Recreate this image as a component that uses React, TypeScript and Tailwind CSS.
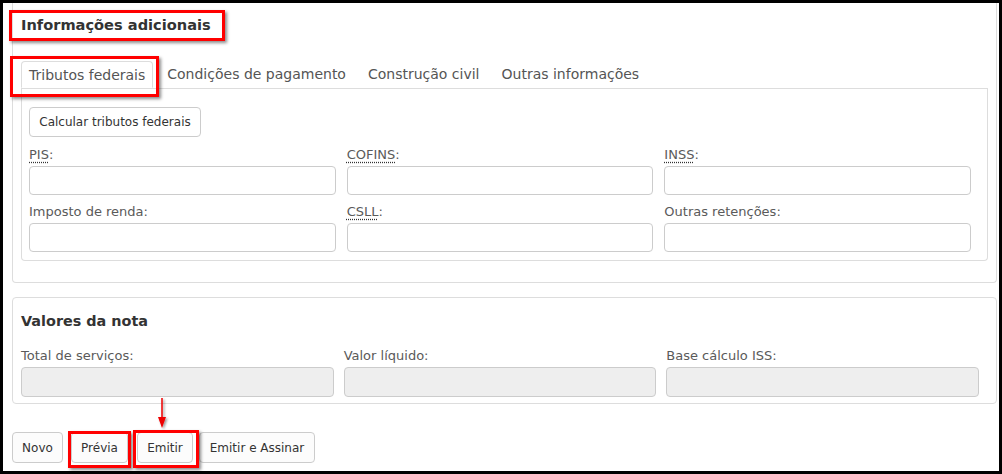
import React from 'react';

const Abbr: React.FC<{ text: string }> = ({ text }) => (
  <span>
    <span className="underline decoration-dotted decoration-[#333] underline-offset-[3px]">{text}</span>:
  </span>
);

const Field: React.FC<{ label: React.ReactNode; disabled?: boolean }> = ({ label, disabled }) => (
  <div className="flex flex-col">
    <label className="text-[13px] leading-[17px] text-[#5a5a5a] mb-[3px]">{label}</label>
    <div
      className={
        disabled
          ? 'h-[30px] rounded-[4px] border border-[#ccc] bg-[#eee]'
          : 'h-[29px] rounded-[4px] border border-[#ccc] bg-white'
      }
    />
  </div>
);

const App: React.FC = () => {
  const tabs = ['Tributos federais', 'Condições de pagamento', 'Construção civil', 'Outras informações'];

  return (
    <div className="relative w-[1002px] h-[474px] box-border border-[3px] border-black bg-white overflow-hidden font-['DejaVu_Sans',Verdana,sans-serif] text-[#333]">
      {/* Informações adicionais */}
      <div className="ml-[9px] mr-[2px] border-x border-b border-[#ddd] rounded-b-[4px] pl-[8px] pb-[21px] pt-[12px]">
        <h3 className="text-[14.6px] leading-[20px] font-bold text-[#333]">Informações adicionais</h3>

        <div className="mt-[26px] mr-[8px]">
          <ul className="flex h-[27px] border-b border-[#ddd] box-content">
            {tabs.map((t, i) => (
              <li
                key={t}
                className={
                  i === 0
                    ? 'h-[27px] -mb-px px-[7px] border border-[#ddd] border-b-white rounded-t-[4px] bg-white text-[14px] leading-[26px] text-[#555]'
                    : 'h-[27px] ml-[6px] px-[8px] text-[14px] leading-[27px] text-[#555]'
                }
              >
                {t}
              </li>
            ))}
          </ul>

          <div className="border-x border-b border-[#ddd] rounded-b-[4px] pl-[7px] pr-[16px] pt-[18px] pb-[8px]">
            <button className="h-[30px] w-[172px] rounded-[4px] border border-[#ccc] bg-white text-[12px] text-[#333]">
              Calcular tributos federais
            </button>
            <div className="grid grid-cols-3 gap-x-[11px] gap-y-[8px] mt-[9px]">
              <Field label={<Abbr text="PIS" />} />
              <Field label={<Abbr text="COFINS" />} />
              <Field label={<Abbr text="INSS" />} />
              <Field label="Imposto de renda:" />
              <Field label={<Abbr text="CSLL" />} />
              <Field label="Outras retenções:" />
            </div>
          </div>
        </div>
      </div>

      {/* Valores da nota */}
      <div className="mt-[14px] ml-[9px] mr-[2px] border border-[#ddd] rounded-[4px] pl-[8px] pr-[17px] pt-[13px] pb-[6px]">
        <h3 className="text-[14.4px] leading-[20px] font-bold text-[#333]">Valores da nota</h3>
        <div className="grid grid-cols-3 gap-x-[10px] mt-[16px]">
          <Field label="Total de serviços:" disabled />
          <Field label="Valor líquido:" disabled />
          <Field label="Base cálculo ISS:" disabled />
        </div>
      </div>

      {/* Botões */}
      <div className="flex mt-[28px] ml-[9px]">
        <button className="h-[31px] w-[51px] rounded-[4px] border border-[#ccc] bg-[#fcfcfc] text-[12px] text-[#333]">Novo</button>
        <button className="h-[31px] w-[57px] ml-[8px] rounded-[4px] border border-[#ccc] bg-[#fcfcfc] text-[12px] text-[#333]">Prévia</button>
        <button className="h-[31px] w-[56px] ml-[9px] rounded-[4px] border border-[#ccc] bg-[#fcfcfc] text-[12px] text-[#333]">Emitir</button>
        <button className="h-[31px] w-[116px] ml-[6px] rounded-[4px] border border-[#ccc] bg-[#fcfcfc] text-[12px] text-[#333]">Emitir e Assinar</button>
      </div>

      {/* Anotações */}
      <div className="absolute left-[6px] top-[7px] w-[216px] h-[31px] border-[3px] border-[#f00] shadow-[2px_2px_3px_rgba(0,0,0,0.45)]" />
      <div className="absolute left-[7px] top-[53px] w-[149px] h-[41px] border-[3px] border-[#f00] shadow-[2px_2px_3px_rgba(0,0,0,0.45)]" />
      <div className="absolute left-[65px] top-[428px] w-[63px] h-[37px] border-[3px] border-[#f00] shadow-[2px_2px_3px_rgba(0,0,0,0.45)]" />
      <div className="absolute left-[130px] top-[427px] w-[66px] h-[38px] border-[3px] border-[#f00] shadow-[2px_2px_3px_rgba(0,0,0,0.45)]" />
      <svg className="absolute left-[152px] top-[394px]" width="20" height="34" viewBox="0 0 20 34">
        <defs>
          <filter id="sh" x="-50%" y="-50%" width="200%" height="200%">
            <feDropShadow dx="1.5" dy="1.5" stdDeviation="1" floodColor="#000" floodOpacity="0.4" />
          </filter>
        </defs>
        <g filter="url(#sh)">
          <line x1="7" y1="1" x2="7" y2="22" stroke="#e00" strokeWidth="1.5" />
          <polygon points="3,20 11,20 7,31" fill="#e00" />
        </g>
      </svg>
    </div>
  );
};

export default App;
